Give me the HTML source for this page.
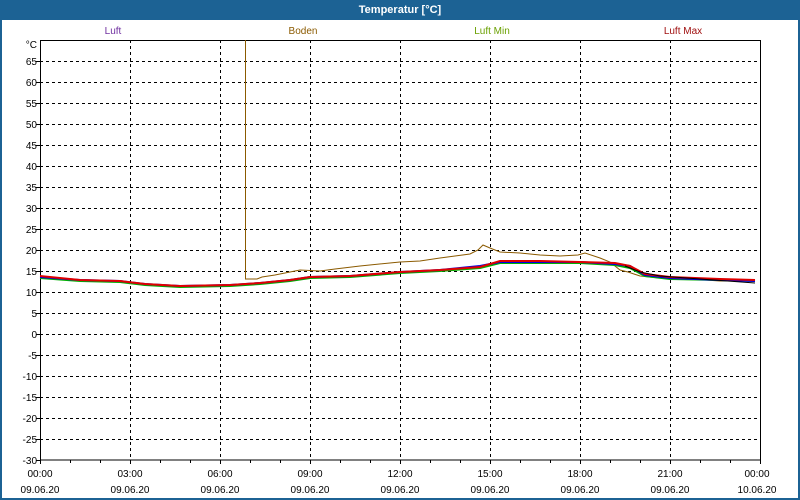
<!DOCTYPE html>
<html><head><meta charset="utf-8"><style>
html,body{margin:0;padding:0;width:800px;height:500px;overflow:hidden;background:#fff;font-family:"Liberation Sans",sans-serif}
</style></head><body>
<svg width="800" height="500" xmlns="http://www.w3.org/2000/svg" font-family="Liberation Sans, sans-serif" font-size="10">
<rect x="0" y="0" width="800" height="500" fill="#1c6294"/>
<rect x="2" y="20" width="796" height="478" fill="#fff"/>
<text x="400" y="13" text-anchor="middle" fill="#fff" font-weight="bold" font-size="11">Temperatur [°C]</text>
<text x="113" y="34" text-anchor="middle" fill="#7030a0">Luft</text>
<text x="303" y="34" text-anchor="middle" fill="#8b5a00">Boden</text>
<text x="492" y="34" text-anchor="middle" fill="#6aa000">Luft Min</text>
<text x="683" y="34" text-anchor="middle" fill="#a01010">Luft Max</text>
<g stroke="#000" stroke-dasharray="3,3" stroke-width="1">
<path d="M40 61.5H760M40 82.5H760M40 103.5H760M40 124.5H760M40 145.5H760M40 166.5H760M40 187.5H760M40 208.5H760M40 229.5H760M40 250.5H760M40 271.5H760M40 292.5H760M40 313.5H760M40 334.5H760M40 355.5H760M40 376.5H760M40 397.5H760M40 418.5H760M40 439.5H760"/>
<path d="M130.5 40V460M220.5 40V460M310.5 40V460M400.5 40V460M490.5 40V460M580.5 40V460M670.5 40V460"/>
</g>
<rect x="40.5" y="40.5" width="720" height="419.5" fill="none" stroke="#000"/>
<g stroke="#000"><path d="M70.5 460v3M100.5 460v3M130.5 460v4M160.5 460v3M190.5 460v3M220.5 460v4M250.5 460v3M280.5 460v3M310.5 460v4M340.5 460v3M370.5 460v3M400.5 460v4M430.5 460v3M460.5 460v3M490.5 460v4M520.5 460v3M550.5 460v3M580.5 460v4M610.5 460v3M640.5 460v3M670.5 460v4M700.5 460v3M730.5 460v3M40.5 460v4M760.5 460v4M36 61.5h4M36 82.5h4M36 103.5h4M36 124.5h4M36 145.5h4M36 166.5h4M36 187.5h4M36 208.5h4M36 229.5h4M36 250.5h4M36 271.5h4M36 292.5h4M36 313.5h4M36 334.5h4M36 355.5h4M36 376.5h4M36 397.5h4M36 418.5h4M36 439.5h4M36 460.5h4"/></g>
<g text-anchor="end" fill="#000">
<text x="37" y="48">°C</text><text x="37" y="65">65</text><text x="37" y="86">60</text><text x="37" y="107">55</text><text x="37" y="128">50</text><text x="37" y="149">45</text><text x="37" y="170">40</text><text x="37" y="191">35</text><text x="37" y="212">30</text><text x="37" y="233">25</text><text x="37" y="254">20</text><text x="37" y="275">15</text><text x="37" y="296">10</text><text x="37" y="317">5</text><text x="37" y="338">0</text><text x="37" y="359">-5</text><text x="37" y="380">-10</text><text x="37" y="401">-15</text><text x="37" y="422">-20</text><text x="37" y="443">-25</text><text x="37" y="464">-30</text>
</g>
<g text-anchor="middle" fill="#000">
<text x="40" y="477">00:00</text><text x="130" y="477">03:00</text><text x="220" y="477">06:00</text><text x="310" y="477">09:00</text><text x="400" y="477">12:00</text><text x="490" y="477">15:00</text><text x="580" y="477">18:00</text><text x="670" y="477">21:00</text><text x="757" y="477">00:00</text>
<text x="40" y="493">09.06.20</text><text x="130" y="493">09.06.20</text><text x="220" y="493">09.06.20</text><text x="310" y="493">09.06.20</text><text x="400" y="493">09.06.20</text><text x="490" y="493">09.06.20</text><text x="580" y="493">09.06.20</text><text x="670" y="493">09.06.20</text><text x="757" y="493">10.06.20</text>
</g>
<polyline fill="none" stroke="#8b5a00" stroke-width="1" points="245.5,40 245.5,279 257,279 262,277 275,275 290,272 300,270 320,271 335,269 360,266 400,262 420,261 440,258 470,254 478,250 483,245 490,248 500,252 520,253 540,255 560,256 578,255 585,253 600,258 610,262 620,270 628,272 640,276 660,278 690,279 720,281 755,281"/>
<polyline fill="none" stroke="#00b000" stroke-width="2" points="40,278 80,281 120,282 145,285 180,287 230,286 260,284 290,281 310,278 350,277 400,273 440,271 480,268 500,263 540,263 580,263 615,265 630,268 645,276 670,279 720,280 755,281"/>
<polyline fill="none" stroke="#0000e0" stroke-width="2" points="40,277 80,280 120,281 145,284 180,286 230,285 260,283 290,280 310,277 350,276 400,272 440,270 480,266 500,262 540,262 580,262 615,264 630,266 645,275 670,278 720,280 755,281"/>
<polyline fill="none" stroke="#e00000" stroke-width="2" points="40,276 80,280 120,281 145,284 180,286 230,285 260,283 290,280 310,277 350,276 400,272 440,270 480,267 500,261 540,261 580,262 615,263 630,266 645,274 670,277 720,279 755,280"/>
<polyline fill="none" stroke="#000" stroke-width="1" points="625,266 640,272 660,276 700,279 755,283"/>
</svg>
</body></html>
